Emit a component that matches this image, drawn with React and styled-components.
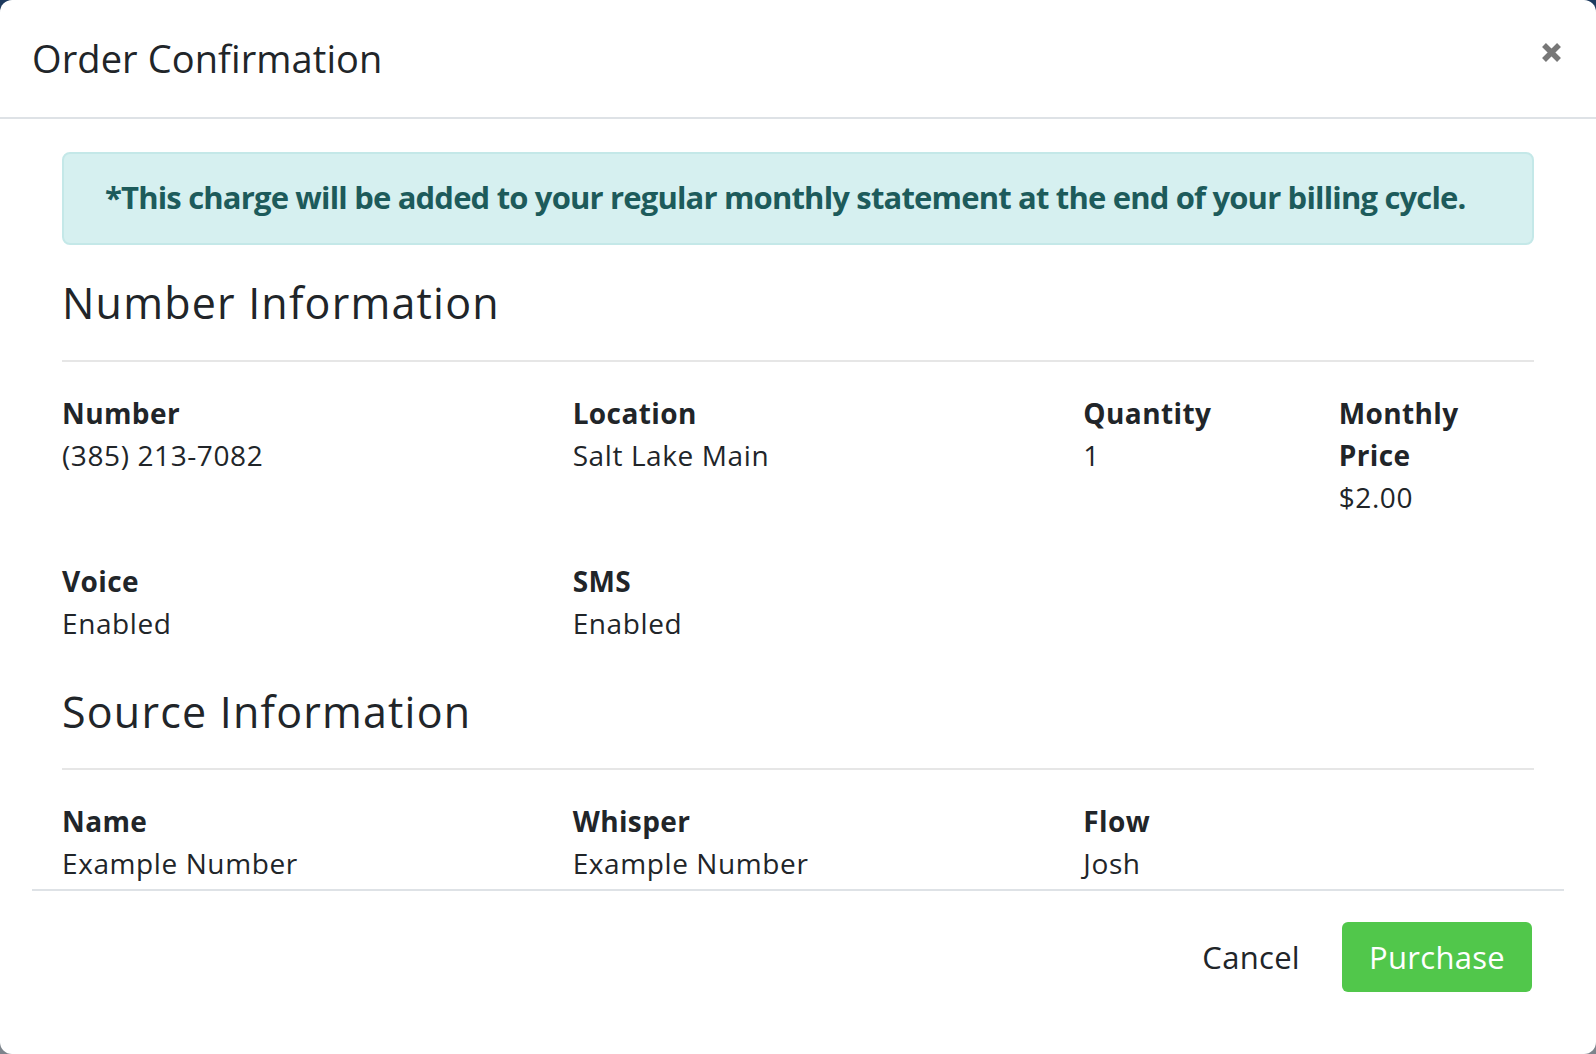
import React from "react";
import styled, { createGlobalStyle } from "styled-components";

const GlobalStyle = createGlobalStyle`
  html, body {
    margin: 0;
    padding: 0;
  }
  body {
    background: linear-gradient(#1d3a5e 0%, #1d3a5e 50%, #7d848c 50%, #7d848c 100%);
    font-family: "Open Sans", "Liberation Sans", sans-serif;
    color: #212529;
  }
`;

const Modal = styled.div`
  width: 1596px;
  height: 1054px;
  background: #ffffff;
  border-radius: 12px;
  overflow: hidden;
  display: flex;
  flex-direction: column;
`;

const Header = styled.header`
  height: 117px;
  flex: 0 0 auto;
  border-bottom: 2px solid #dee2e6;
  display: flex;
  align-items: center;
  justify-content: space-between;
  padding: 0 34px 0 32px;
`;

const Title = styled.h5`
  margin: 0;
  font-size: 38px;
  font-weight: 400;
  line-height: 1.2;
  color: #212529;
  letter-spacing: 0.1px;
`;

const CloseButton = styled.button`
  border: 0;
  background: transparent;
  padding: 0;
  width: 22px;
  height: 22px;
  margin-bottom: 12px;
  display: flex;
  align-items: center;
  justify-content: center;
  cursor: pointer;
`;

const Body = styled.div`
  flex: 1 1 auto;
  overflow: hidden;
  padding: 33px 62px 0;
`;

const Alert = styled.div`
  height: 93px;
  box-sizing: border-box;
  border: 2px solid #c4e8e8;
  background: #d6f0f0;
  border-radius: 8px;
  color: #1d5b5b;
  font-weight: 700;
  font-size: 31px;
  letter-spacing: -0.83px;
  display: flex;
  align-items: center;
  padding: 0 0 4px 41px;
  margin-bottom: 32px;
`;

const SectionTitle = styled.h3`
  margin: 0 0 31px;
  font-size: 43px;
  font-weight: 400;
  line-height: 1.2;
  color: #212529;
  letter-spacing: 1.2px;
`;

const Rule = styled.hr`
  border: 0;
  border-top: 2px solid #e6e6e6;
  margin: 0 0 30px;
`;

const Row = styled.div`
  display: grid;
  grid-template-columns: repeat(12, minmax(0, 1fr));
  margin: 0 -30px;
`;

const Col = styled.div`
  grid-column: span ${(p) => p.$span || 12};
  padding: 0 30px;
  margin-bottom: 42px;
  min-width: 0;
`;

const Label = styled.div`
  font-weight: 700;
  font-size: 28px;
  line-height: 42px;
  color: #212529;
  letter-spacing: 0.4px;
`;

const Value = styled.div`
  font-size: 28px;
  line-height: 42px;
  color: #212529;
  letter-spacing: 0.6px;
`;

const Footer = styled.footer`
  flex: 0 0 auto;
  margin: 0 32px;
  border-top: 2px solid #dee2e6;
  padding: 31px 32px 62px 0;
  display: flex;
  justify-content: flex-end;
  align-items: center;
  gap: 22px;
`;

const Button = styled.button`
  height: 70px;
  box-sizing: border-box;
  border: 0;
  border-radius: 6px;
  font-family: inherit;
  font-size: 31px;
  font-weight: 400;
  padding: 0 ${(p) => (p.$primary ? "27px" : "20px")};
  background: ${(p) => (p.$primary ? "#51c74b" : "transparent")};
  color: ${(p) => (p.$primary ? "#ffffff" : "#212529")};
  cursor: pointer;
  letter-spacing: 0.3px;
`;

const Field = ({ label, value, span }) => (
  <Col $span={span}>
    <Label>{label}</Label>
    <Value>{value}</Value>
  </Col>
);

const CloseIcon = () => (
  <svg width="21" height="21" viewBox="0 0 21 21">
    <path
      d="M3 3 L18 18 M18 3 L3 18"
      stroke="#777777"
      strokeWidth="5.5"
      strokeLinecap="butt"
      fill="none"
    />
  </svg>
);

export default function App() {
  return (
    <>
      <GlobalStyle />
      <Modal>
        <Header>
          <Title>Order Confirmation</Title>
          <CloseButton aria-label="Close">
            <CloseIcon />
          </CloseButton>
        </Header>
        <Body>
          <Alert>
            *This charge will be added to your regular monthly statement at the end of your billing cycle.
          </Alert>
          <SectionTitle>Number Information</SectionTitle>
          <Rule />
          <Row>
            <Field span={4} label="Number" value="(385) 213-7082" />
            <Field span={4} label="Location" value="Salt Lake Main" />
            <Field span={2} label="Quantity" value="1" />
            <Field span={2} label="Monthly Price" value="$2.00" />
            <Field span={4} label="Voice" value="Enabled" />
            <Field span={4} label="SMS" value="Enabled" />
          </Row>
          <SectionTitle>Source Information</SectionTitle>
          <Rule />
          <Row>
            <Field span={4} label="Name" value="Example Number" />
            <Field span={4} label="Whisper" value="Example Number" />
            <Field span={4} label="Flow" value="Josh" />
          </Row>
        </Body>
        <Footer>
          <Button>Cancel</Button>
          <Button $primary>Purchase</Button>
        </Footer>
      </Modal>
    </>
  );
}
